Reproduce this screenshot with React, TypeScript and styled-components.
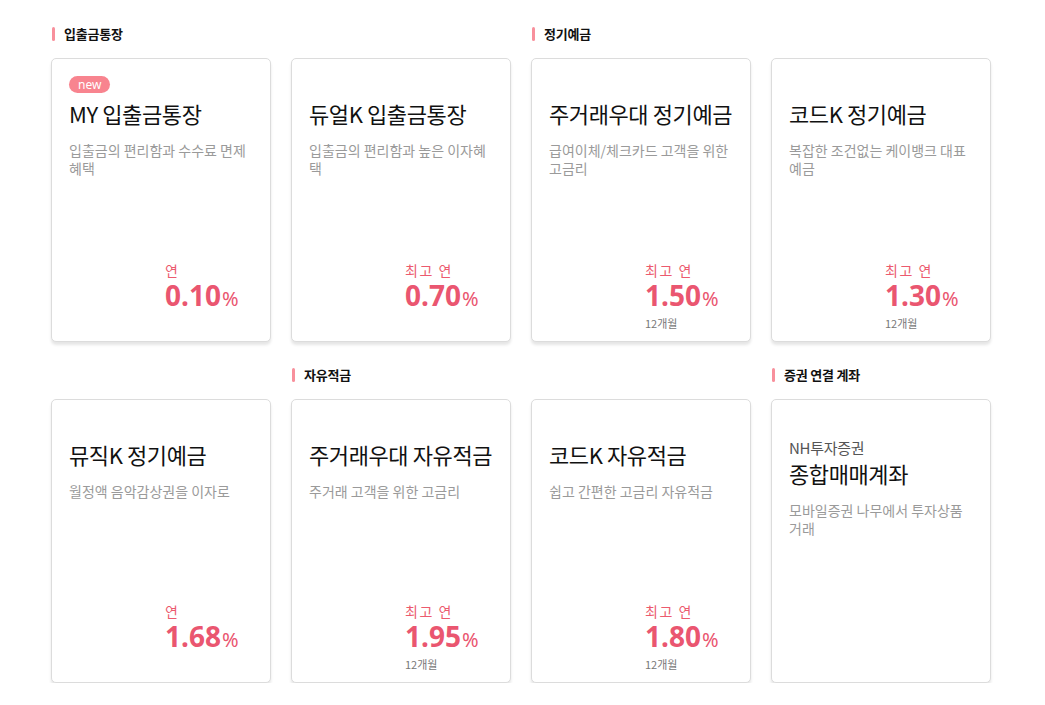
import React from 'react';
import styled, { createGlobalStyle } from 'styled-components';

const GlobalStyle = createGlobalStyle`
  body {
    margin: 0;
    background: #ffffff;
    font-family: "Noto Sans CJK KR", "Noto Sans", sans-serif;
  }
`;

const Page = styled.div`
  padding: 24px 0 0 51px;
  display: grid;
  grid-template-columns: repeat(4, 220px);
  column-gap: 20px;
  row-gap: 23px;
`;

const Cell = styled.div`
  display: flex;
  flex-direction: column;
`;

const SectionTitle = styled.h3`
  margin: 0 0 14px;
  height: 20px;
  display: flex;
  align-items: center;
  gap: 9px;
  font-size: 13px;
  font-weight: 700;
  line-height: 20px;
  color: #111;
  letter-spacing: -0.2px;

  &::before {
    content: '';
    width: 3px;
    height: 14px;
    margin-left: 1px;
    border-radius: 2px;
    background: ${(p: { $empty?: boolean }) => (p.$empty ? 'transparent' : '#f8909c')};
  }
`;

const Card = styled.div`
  box-sizing: border-box;
  height: 284px;
  padding: 17px 17px 0;
  border: 1px solid #dcdcdc;
  border-radius: 5px;
  background: #fff;
  box-shadow: 0 3px 3px rgba(0, 0, 0, 0.1);
  display: flex;
  flex-direction: column;
`;

const Info = styled.div`
  height: 187px;
  display: flex;
  flex-direction: column;
`;

const BadgeSlot = styled.div`
  display: flex;
  align-items: flex-start;
  height: 18px;
  margin-bottom: 5px;
`;

const Badge = styled.span`
  display: block;
  height: 17px;
  padding: 0 9px;
  border-radius: 9px;
  background: #f8848f;
  color: #fff;
  font-family: "Noto Sans", sans-serif;
  font-size: 12px;
  line-height: 17px;
`;

const Provider = styled.div`
  font-size: 15px;
  line-height: 18px;
  color: #555;
  letter-spacing: -0.3px;
  margin-top: -1px;
`;

const Title = styled.div`
  font-size: 22px;
  line-height: 28px;
  margin-top: ${(p: { $sub?: boolean }) => (p.$sub ? '2px' : '0')};
  color: #111;
  letter-spacing: -0.4px;
`;

const Desc = styled.p`
  margin: 14px 0 0;
  font-size: 14px;
  line-height: 18px;
  color: #9a9a9a;
`;

const Rate = styled.div`
  margin-left: 96px;
  display: flex;
  flex-direction: column;
`;

const RateLabel = styled.div`
  font-size: 14px;
  line-height: 15px;
  color: #ec5a6e;
  letter-spacing: 1.5px;
`;

const RateValue = styled.div`
  margin-top: 3px;
  font-family: "Noto Sans", sans-serif;
  font-size: 28px;
  font-weight: 700;
  line-height: 29px;
  color: #ea5670;
  white-space: nowrap;

  span {
    font-size: 20px;
    font-weight: 400;
    margin-left: 1px;
  }
`;

const Period = styled.div`
  margin-top: 3px;
  font-size: 11px;
  line-height: 14px;
  color: #777;
`;

type Product = {
  section?: string;
  badge?: string;
  provider?: string;
  title: string;
  desc: string;
  label: string;
  rate: string;
  period?: string;
};

const products: Product[] = [
  { section: '입출금통장', badge: 'new', title: 'MY 입출금통장', desc: '입출금의 편리함과 수수료 면제 혜택', label: '연', rate: '0.10' },
  { title: '듀얼K 입출금통장', desc: '입출금의 편리함과 높은 이자혜택', label: '최고 연', rate: '0.70' },
  { section: '정기예금', title: '주거래우대 정기예금', desc: '급여이체/체크카드 고객을 위한 고금리', label: '최고 연', rate: '1.50', period: '12개월' },
  { title: '코드K 정기예금', desc: '복잡한 조건없는 케이뱅크 대표 예금', label: '최고 연', rate: '1.30', period: '12개월' },
  { title: '뮤직K 정기예금', desc: '월정액 음악감상권을 이자로', label: '연', rate: '1.68' },
  { section: '자유적금', title: '주거래우대 자유적금', desc: '주거래 고객을 위한 고금리', label: '최고 연', rate: '1.95', period: '12개월' },
  { title: '코드K 자유적금', desc: '쉽고 간편한 고금리 자유적금', label: '최고 연', rate: '1.80', period: '12개월' },
  { section: '증권 연결 계좌', provider: 'NH투자증권', title: '종합매매계좌', desc: '모바일증권 나무에서 투자상품 거래', label: '', rate: '' },
];

const App: React.FC = () => {
  return (
    <>
      <GlobalStyle />
      <Page>
        {products.map((p, idx) => (
          <Cell key={idx}>
            <SectionTitle $empty={!p.section}>{p.section || ''}</SectionTitle>
            <Card>
              <Info>
                <BadgeSlot>{p.badge && <Badge>{p.badge}</Badge>}</BadgeSlot>
                {p.provider && <Provider>{p.provider}</Provider>}
                <Title $sub={!!p.provider}>{p.title}</Title>
                <Desc>{p.desc}</Desc>
              </Info>
              {p.rate && (
                <Rate>
                  <RateLabel>{p.label}</RateLabel>
                  <RateValue>
                    {p.rate}
                    <span>%</span>
                  </RateValue>
                  {p.period && <Period>{p.period}</Period>}
                </Rate>
              )}
            </Card>
          </Cell>
        ))}
      </Page>
    </>
  );
};

export default App;
